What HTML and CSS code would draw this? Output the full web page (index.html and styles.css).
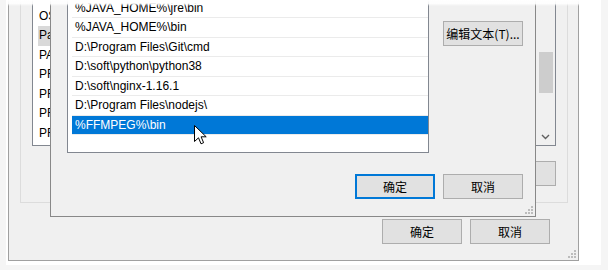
FILE: index.html
```html
<!DOCTYPE html>
<html lang="zh-CN">
<head>
    <meta charset="UTF-8">
    <meta name="viewport" content="width=device-width, initial-scale=1.0">
    <title>环境变量 - 编辑环境变量</title>
    <link rel="stylesheet" href="styles.css">
</head>
<body>
    <div class="card">
        <!-- 环境变量窗口 (后面) -->
        <div class="win env-win">
            <div class="group">
                <div class="listview">
                    <div class="lv-rows">
                        <div class="lv-row">NUMBER_OF_PROCESSORS</div>
                        <div class="lv-row">OS</div>
                        <div class="lv-row selected">Path</div>
                        <div class="lv-row">PATHEXT</div>
                        <div class="lv-row">PROCESSOR_ARCHITECTURE</div>
                        <div class="lv-row">PROCESSOR_IDENTIFIER</div>
                        <div class="lv-row">PROCESSOR_LEVEL</div>
                        <div class="lv-row">PROCESSOR_REVISION</div>
                    </div>
                    <div class="lv-rest"></div>
                    <div class="vscroll">
                        <div class="thumb"></div>
                        <div class="arrow-down">
                            <svg width="9" height="6" viewBox="0 0 9 6"><path d="M1 1 L4.5 4.5 L8 1" fill="none" stroke="#606060" stroke-width="1.4"/></svg>
                        </div>
                    </div>
                </div>
                <div class="btn-row">
                    <button class="btn" aria-label="新建(W)..."></button>
                    <button class="btn" aria-label="编辑(I)..."></button>
                    <button class="btn" aria-label="删除(L)"></button>
                </div>
            </div>
            <div class="footer">
                <button class="btn">确定</button>
                <button class="btn">取消</button>
            </div>
            <svg class="grip" width="8" height="8" viewBox="0 0 8 8">
                <rect x="6" y="0" width="2" height="2"/><rect x="3" y="3" width="2" height="2"/><rect x="6" y="3" width="2" height="2"/>
                <rect x="0" y="6" width="2" height="2"/><rect x="3" y="6" width="2" height="2"/><rect x="6" y="6" width="2" height="2"/>
            </svg>
        </div>

        <!-- 编辑环境变量窗口 (前面) -->
        <div class="win edit-win">
            <div class="edit-body">
                <ul class="path-list">
                    <li>%JAVA_HOME%\jre\bin</li>
                    <li>%JAVA_HOME%\bin</li>
                    <li>D:\Program Files\Git\cmd</li>
                    <li>D:\soft\python\python38</li>
                    <li>D:\soft\nginx-1.16.1</li>
                    <li>D:\Program Files\nodejs\</li>
                    <li class="selected">%FFMPEG%\bin</li>
                </ul>
                <div class="side">
                    <button class="btn">编辑文本(T)...</button>
                </div>
            </div>
            <div class="footer edit-footer">
                <button class="btn focus">确定</button>
                <button class="btn">取消</button>
            </div>
            <svg class="grip" width="8" height="8" viewBox="0 0 8 8">
                <rect x="6" y="0" width="2" height="2"/><rect x="3" y="3" width="2" height="2"/><rect x="6" y="3" width="2" height="2"/>
                <rect x="0" y="6" width="2" height="2"/><rect x="3" y="6" width="2" height="2"/><rect x="6" y="6" width="2" height="2"/>
            </svg>
        </div>

        <svg class="cursor" width="13" height="21" viewBox="0 0 13 21">
            <path d="M0.5 0.5 L0.5 16.5 L4.5 12.8 L7 18.8 L9.6 17.7 L7.1 11.8 L12.2 11.8 Z" fill="#fff" stroke="#000" stroke-width="1" stroke-linejoin="miter"/>
        </svg>
        <div class="fade"></div>
    </div>
</body>
</html>
```

FILE: styles.css
```css
/* genel */
body { margin: 0; background: #f5f5f5; font-family: "Liberation Sans", "Noto Sans CJK SC", sans-serif; font-size: 12px; color: #000; }
.card { position: relative; margin-left: 6px; width: 595px; height: 265px; background: #fff; overflow: hidden; }
.fade { position: absolute; top: 0; left: 0; right: 0; height: 6px; background: linear-gradient(to bottom, #fff 0, rgba(255,255,255,0.9) 60%, rgba(255,255,255,0) 100%); z-index: 3; }

/* pencereler */
.win { position: absolute; background: #f0f0f0; box-sizing: border-box; }
.env-win { left: 2px; top: -40px; width: 571px; border: 1px solid #a0a0a0; padding: 12px 10px 16px 11px; }
.edit-win { left: 44px; top: -15.5px; width: 486px; border: 1px solid #888; padding: 12px 12px 17px 16px; z-index: 2; }
.grip { position: absolute; right: 2px; bottom: 2px; fill: #bcbcbc; }

/* sistem değişkenleri grubu */
.group { border: 1px solid #dcdcdc; padding: 12px 11px 16px 11px; }
.listview { display: flex; height: 160px; border: 1px solid #828790; background: #fff; box-sizing: border-box; }
.lv-rows { width: 12px; margin-left: 5px; overflow: hidden; }
.lv-rest { flex: 1; }
.lv-row { height: 19.5px; line-height: 19.5px; padding-left: 1px; white-space: nowrap; overflow: hidden; }
.lv-row.selected { background: #d9d9d9; }
.vscroll { width: 19px; background: #f0f0f0; display: flex; flex-direction: column; }
.thumb { margin: 65px 0 0 3px; width: 14px; height: 41px; background: #cdcdcd; }
.arrow-down { margin-top: auto; height: 17px; display: flex; align-items: center; justify-content: center; }
.btn-row { display: flex; justify-content: flex-end; gap: 8px; margin-top: 15px; }

/* butonlar */
.btn { width: 80px; height: 25px; box-sizing: border-box; padding: 0; background: #e1e1e1; border: 1px solid #adadad; color: #000; font: 12px "Noto Sans CJK SC", "Liberation Sans", sans-serif; }
.btn.focus { border: 2px solid #0078d7; }
.footer { display: flex; justify-content: flex-end; gap: 8px; margin-top: 16px; padding-right: 18px; }
.edit-footer { margin-top: 21px; padding-right: 0; }

/* path listesi */
.edit-body { display: flex; }
.path-list { list-style: none; margin: 0; padding: 0 0 0 4px; width: 362px; height: 155.5px; box-sizing: border-box; border: 1px solid #828790; background: #fff; overflow: hidden; }
.path-list li { height: 19.5px; line-height: 19.5px; padding-left: 3px; box-sizing: border-box; border-bottom: 1px solid #ebebeb; white-space: nowrap; }
.path-list li.selected { background: #0078d7; color: #fff; }
.side { margin-left: 14px; padding-top: 23.5px; }

.cursor { position: absolute; left: 188px; top: 125px; z-index: 4; }
```
